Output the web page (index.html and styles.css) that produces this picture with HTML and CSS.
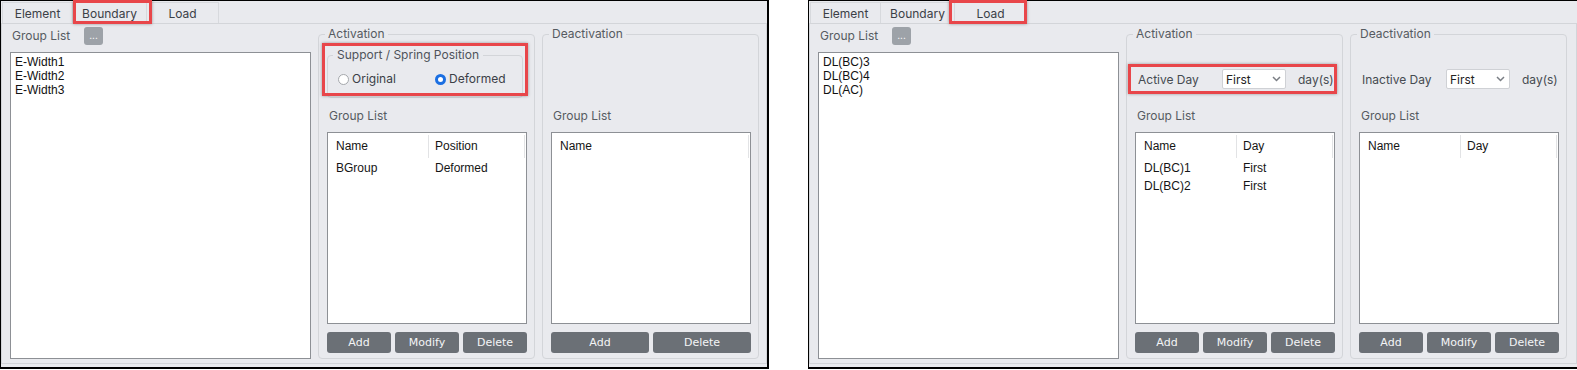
FILE: index.html
```html
<!DOCTYPE html>
<html>

<head>
    <meta charset="UTF-8">
    <title>Construction Stage</title>
    <link rel="stylesheet" href="styles.css">
</head>

<body>
    <div class="screens">
        <!-- Boundary tab -->
        <div class="panel">
            <div class="tabs">
                <div class="tab tab-element">Element</div>
                <div class="tab tab-boundary active">Boundary</div>
                <div class="tab tab-load">Load</div>
            </div>
            <div class="pane">
                <div class="group-col">
                    <div class="group-head">
                        <span class="label">Group List</span>
                        <div class="more-btn">...</div>
                    </div>
                    <div class="list-box">
                        <div class="list-item">E-Width1</div>
                        <div class="list-item">E-Width2</div>
                        <div class="list-item">E-Width3</div>
                    </div>
                </div>
                <fieldset class="box">
                    <legend>Activation</legend>
                    <div class="options">
                        <fieldset class="sub-box">
                            <legend>Support / Spring Position</legend>
                            <div class="radios">
                                <div class="radio"><span class="radio-dot"></span>Original</div>
                                <div class="radio checked"><span class="radio-dot"></span>Deformed</div>
                            </div>
                        </fieldset>
                    </div>
                    <div class="label list-label">Group List</div>
                    <div class="table">
                        <div class="thead">
                            <div class="th col-name">Name</div>
                            <div class="th col-val">Position</div>
                        </div>
                        <div class="tr">
                            <div class="td col-name">BGroup</div>
                            <div class="td col-val">Deformed</div>
                        </div>
                    </div>
                    <div class="btn-row">
                        <div class="btn">Add</div>
                        <div class="btn">Modify</div>
                        <div class="btn">Delete</div>
                    </div>
                </fieldset>
                <fieldset class="box">
                    <legend>Deactivation</legend>
                    <div class="options"></div>
                    <div class="label list-label">Group List</div>
                    <div class="table">
                        <div class="thead">
                            <div class="th col-full">Name</div>
                        </div>
                    </div>
                    <div class="btn-row">
                        <div class="btn">Add</div>
                        <div class="btn">Delete</div>
                    </div>
                </fieldset>
            </div>
            <div class="mark mark-boundary"></div>
            <div class="mark mark-support"></div>
        </div>

        <!-- Load tab -->
        <div class="panel panel-right">
            <div class="tabs">
                <div class="tab tab-element">Element</div>
                <div class="tab tab-boundary">Boundary</div>
                <div class="tab tab-load active">Load</div>
            </div>
            <div class="pane">
                <div class="group-col">
                    <div class="group-head">
                        <span class="label">Group List</span>
                        <div class="more-btn">...</div>
                    </div>
                    <div class="list-box">
                        <div class="list-item">DL(BC)3</div>
                        <div class="list-item">DL(BC)4</div>
                        <div class="list-item">DL(AC)</div>
                    </div>
                </div>
                <fieldset class="box">
                    <legend>Activation</legend>
                    <div class="options">
                        <div class="day-row">
                            <span class="day-label">Active Day</span>
                            <div class="select">
                                <span>First</span>
                                <svg width="9" height="6" viewBox="0 0 9 6"><polyline points="1,1 4.5,4.5 8,1" fill="none" stroke="#7a7e84" stroke-width="1.5"/></svg>
                            </div>
                            <span class="day-unit">day(s)</span>
                        </div>
                    </div>
                    <div class="label list-label">Group List</div>
                    <div class="table">
                        <div class="thead">
                            <div class="th col-name">Name</div>
                            <div class="th col-val">Day</div>
                        </div>
                        <div class="tr">
                            <div class="td col-name">DL(BC)1</div>
                            <div class="td col-val">First</div>
                        </div>
                        <div class="tr">
                            <div class="td col-name">DL(BC)2</div>
                            <div class="td col-val">First</div>
                        </div>
                    </div>
                    <div class="btn-row">
                        <div class="btn">Add</div>
                        <div class="btn">Modify</div>
                        <div class="btn">Delete</div>
                    </div>
                </fieldset>
                <fieldset class="box">
                    <legend>Deactivation</legend>
                    <div class="options">
                        <div class="day-row">
                            <span class="day-label inactive">Inactive Day</span>
                            <div class="select">
                                <span>First</span>
                                <svg width="9" height="6" viewBox="0 0 9 6"><polyline points="1,1 4.5,4.5 8,1" fill="none" stroke="#7a7e84" stroke-width="1.5"/></svg>
                            </div>
                            <span class="day-unit">day(s)</span>
                        </div>
                    </div>
                    <div class="label list-label">Group List</div>
                    <div class="table">
                        <div class="thead">
                            <div class="th col-name">Name</div>
                            <div class="th col-val">Day</div>
                        </div>
                    </div>
                    <div class="btn-row">
                        <div class="btn">Add</div>
                        <div class="btn">Modify</div>
                        <div class="btn">Delete</div>
                    </div>
                </fieldset>
            </div>
            <div class="mark mark-load"></div>
            <div class="mark mark-active-day"></div>
        </div>
    </div>
</body>

</html>
```

FILE: styles.css
```css
body {
    margin: 0;
    background: #ffffff;
    font-family: "Inter", "Noto Sans", sans-serif;
    font-size: 12px;
}

.screens {
    display: flex;
    align-items: flex-start;
    gap: 39px;
}

/* one dialog screenshot */
.panel {
    position: relative;
    width: 769px;
    box-sizing: border-box;
    display: flex;
    flex-direction: column;
    padding-bottom: 3px;
    background: #e9eaee;
    border: 1px solid #000000;
    border-right-width: 2px;
    border-bottom-width: 2px;
}

.panel-right {
    border-right: none;
}

.tabs {
    display: flex;
    height: 22px;
    padding-left: 1px;
}

.tab {
    box-sizing: border-box;
    height: 21px;
    margin-top: 1px;
    line-height: 21px;
    text-align: center;
    color: #3b4046;
    border-top: 1px solid #d7d9dd;
    border-right: 1px solid #d7d9dd;
}

.tab-element {
    width: 71px;
    border-left: 1px solid #d7d9dd;
}

.tab-boundary {
    width: 74px;
}

.tab-load {
    width: 72px;
}

.pane {
    display: flex;
    gap: 7px;
    height: 341px;
    box-sizing: border-box;
    padding: 3px 7px 4px 8px;
    border: 1px solid #d3d5d9;
}

.label {
    color: #565b61;
    line-height: 14px;
}

.group-col {
    width: 301px;
    display: flex;
    flex-direction: column;
}

.group-head {
    display: flex;
    align-items: center;
    height: 18px;
    padding-left: 2px;
}

.group-head .label {
    width: 72px;
}

.more-btn {
    width: 19px;
    height: 18px;
    border-radius: 3px;
    background: #9da2a8;
    color: #ffffff;
    font-size: 10px;
    line-height: 16px;
    text-align: center;
}

.list-box {
    flex: 1;
    margin-top: 7px;
    padding: 2px 4px;
    background: #ffffff;
    border: 1px solid #8d9095;
}

.list-item {
    font-family: "Liberation Sans", Arial, sans-serif;
    font-size: 12px;
    line-height: 14px;
    color: #111111;
}

/* Activation / Deactivation boxes */
.box {
    margin: 0;
    min-width: 0;
    width: 217px;
    box-sizing: border-box;
    display: flex;
    flex-direction: column;
    padding: 0 7px 5px 8px;
    border: 1px solid #d3d5d9;
    border-radius: 4px;
}

.box legend {
    padding: 0 3px;
    margin-left: -2px;
    line-height: 14px;
    color: #565b61;
}

.options {
    flex: none;
    height: 61px;
}

.sub-box {
    margin: 7px 0 0 0;
    min-width: 0;
    width: 196px;
    box-sizing: border-box;
    padding: 10px 10px 11px 10px;
    border: 1px solid #d3d5d9;
    border-radius: 4px;
}

.sub-box legend {
    padding: 0 4px;
    margin-left: -5px;
    line-height: 14px;
    color: #4e535a;
}

.radios {
    display: grid;
    grid-template-columns: 97px auto;
}

.radio {
    display: flex;
    align-items: center;
    gap: 3px;
    line-height: 14px;
    color: #3b4046;
}

.radio-dot {
    width: 11px;
    height: 11px;
    box-sizing: border-box;
    border-radius: 50%;
    border: 1px solid #a5a8ac;
    background: #ffffff;
}

.radio.checked .radio-dot {
    border: 3px solid #1b6fe2;
}

.day-row {
    display: flex;
    align-items: center;
    padding: 28px 0 0 3px;
}

.day-label {
    width: 84px;
    color: #464b51;
}

.select {
    width: 64px;
    height: 20px;
    box-sizing: border-box;
    display: flex;
    align-items: center;
    justify-content: space-between;
    padding: 0 4px 0 3px;
    background: #ffffff;
    border: 1px solid #cfd1d5;
    border-radius: 2px;
    color: #222222;
}

.day-unit {
    margin-left: 12px;
    color: #464b51;
}

.list-label {
    margin: 7px 0 9px 2px;
}

.table {
    flex: 1;
    min-height: 0;
    background: #ffffff;
    border: 1px solid #8d9095;
    font-family: "Liberation Sans", Arial, sans-serif;
    font-size: 12px;
    color: #151515;
}

.thead {
    display: flex;
    height: 26px;
}

.th {
    box-sizing: border-box;
    height: 23px;
    margin-top: 2px;
    line-height: 23px;
    border-right: 1px solid #e2e3e5;
}

.tr {
    display: flex;
    height: 18px;
    line-height: 18px;
}

.col-name {
    box-sizing: border-box;
    width: 101px;
    padding-left: 8px;
}

.col-val {
    box-sizing: border-box;
    width: 96px;
    padding-left: 6px;
}

.col-full {
    width: 197px;
    box-sizing: border-box;
    padding-left: 8px;
}

.btn-row {
    display: flex;
    gap: 4px;
    margin-top: 8px;
}

.btn {
    flex: 1;
    height: 21px;
    line-height: 21px;
    text-align: center;
    border-radius: 3px;
    background: #6b7076;
    color: #f4f5f6;
    font-family: "DejaVu Sans", sans-serif;
    font-size: 11px;
}

/* red highlight boxes drawn over the screenshot */
.mark {
    position: absolute;
    box-sizing: border-box;
    border: 3px solid #e8464a;
    box-shadow: 0 0 3px rgba(0, 0, 0, 0.35);
}

.mark-boundary {
    left: 72px;
    top: -1px;
    width: 79px;
    height: 24px;
}

.mark-support {
    left: 321px;
    top: 42px;
    width: 206px;
    height: 53px;
}

.mark-load {
    left: 140px;
    top: -1px;
    width: 78px;
    height: 24px;
}

.mark-active-day {
    left: 319px;
    top: 63px;
    width: 209px;
    height: 30px;
}
```
